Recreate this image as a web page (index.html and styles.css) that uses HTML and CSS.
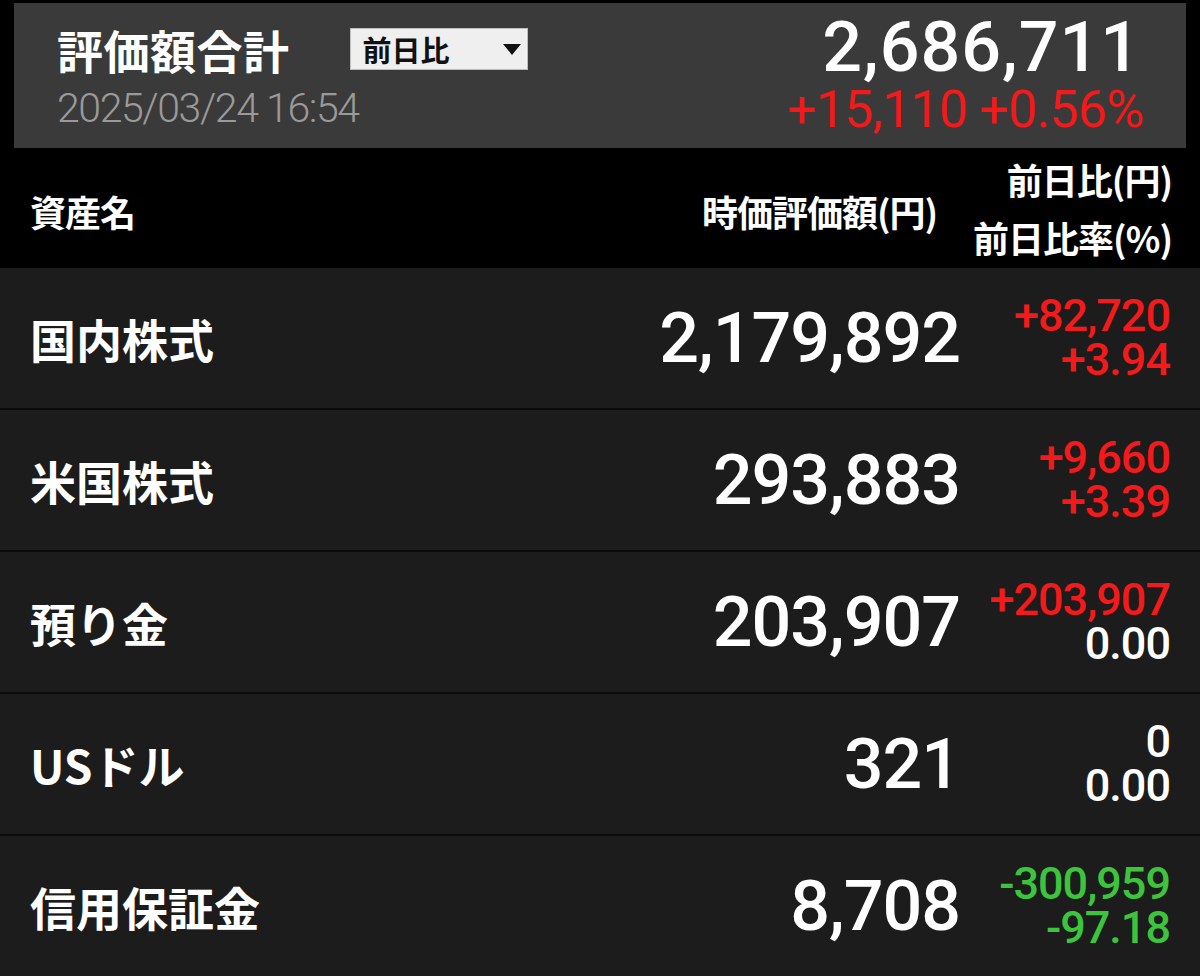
FILE: index.html
```html
<!DOCTYPE html>
<html lang="ja">
<head>
<meta charset="utf-8">
<title>評価額合計</title>
<link rel="stylesheet" href="styles.css">
</head>
<body>
<div class="screen">
  <section class="summary">
    <div class="summary-left">
      <div class="summary-title-row">
        <h1 class="summary-title">評価額合計</h1>
        <div class="select">
          <span class="select-label">前日比</span>
          <span class="select-arrow"></span>
        </div>
      </div>
      <div class="summary-date">2025/03/24 16:54</div>
    </div>
    <div class="summary-right">
      <div class="summary-total">2,686,711</div>
      <div class="summary-change up">+15,110 +0.56%</div>
    </div>
  </section>

  <div class="table-head">
    <div class="th-name">資産名</div>
    <div class="th-value">時価評価額(円)</div>
    <div class="th-change">
      <div>前日比(円)</div>
      <div>前日比率(%)</div>
    </div>
  </div>

  <div class="rows">
    <div class="row">
      <div class="name">国内株式</div>
      <div class="value">2,179,892</div>
      <div class="change up"><div>+82,720</div><div>+3.94</div></div>
    </div>
    <div class="row">
      <div class="name">米国株式</div>
      <div class="value">293,883</div>
      <div class="change up"><div>+9,660</div><div>+3.39</div></div>
    </div>
    <div class="row">
      <div class="name">預り金</div>
      <div class="value">203,907</div>
      <div class="change"><div class="up">+203,907</div><div>0.00</div></div>
    </div>
    <div class="row">
      <div class="name">USドル</div>
      <div class="value">321</div>
      <div class="change"><div>0</div><div>0.00</div></div>
    </div>
    <div class="row">
      <div class="name">信用保証金</div>
      <div class="value">8,708</div>
      <div class="change down"><div>-300,959</div><div>-97.18</div></div>
    </div>
  </div>
</div>
</body>
</html>
```
FILE: styles.css
```css
html, body {
  margin: 0;
  padding: 0;
  background: #000;
}
body {
  width: 1200px;
  height: 976px;
  overflow: hidden;
  font-family: "Noto Sans CJK JP", "Noto Sans", sans-serif;
  color: #fff;
}
.screen {
  display: flex;
  flex-direction: column;
}
.summary {
  margin: 3px 14px 0 14px;
  height: 145px;
  background: #3a3a3a;
  display: flex;
  justify-content: space-between;
  box-sizing: border-box;
  padding: 0 44px 0 43px;
}
.summary-left {
  display: flex;
  flex-direction: column;
  padding-top: 16px;
}
.summary-title-row {
  display: flex;
  align-items: center;
  gap: 60px;
}
.summary-title {
  margin: 0;
  font-size: 46px;
  font-weight: 700;
  line-height: 60px;
  letter-spacing: 0.5px;
}
.select {
  width: 178px;
  height: 42px;
  box-sizing: border-box;
  background: #efefef;
  border: 1px solid #bdbdbd;
  display: flex;
  align-items: center;
  justify-content: space-between;
  padding: 0 6px 0 12px;
  color: #111;
}
.select-label {
  font-size: 29px;
  font-weight: 700;
  line-height: 1;
}
.select-arrow {
  width: 0;
  height: 0;
  border-left: 9px solid transparent;
  border-right: 9px solid transparent;
  border-top: 11px solid #111;
}
.summary-date {
  font-family: "Roboto", "Liberation Sans", sans-serif;
  font-weight: 300;
  font-size: 41px;
  letter-spacing: -1.4px;
  color: #9a9a9a;
  line-height: 50px;
  margin-top: 4px;
}
.summary-right {
  display: flex;
  flex-direction: column;
  align-items: flex-end;
  font-family: "Roboto", "Liberation Sans", sans-serif;
  padding-top: 6px;
}
.summary-total {
  font-size: 70px;
  font-weight: 500;
  line-height: 76px;
  letter-spacing: 1px;
  margin-right: 1px;
}
.summary-change {
  font-size: 52px;
  font-weight: 400;
  line-height: 50px;
  letter-spacing: -0.8px;
  margin-right: -2px;
}
.up { color: #f21a1a; }
.down { color: #3cc43c; }

.table-head {
  height: 120px;
  display: flex;
  align-items: center;
  padding: 0 28px 0 30px;
  font-size: 36px;
  font-weight: 700;
  letter-spacing: -1px;
}
.th-name {
  flex: 1;
  padding-top: 6px;
}
.th-value {
  padding-top: 6px;
  margin-right: 36px;
}
.th-change {
  display: flex;
  flex-direction: column;
  align-items: flex-end;
  gap: 10px;
  line-height: 48px;
}

.rows {
  display: flex;
  flex-direction: column;
}
.row {
  height: 140px;
  background: #1c1c1c;
  border-bottom: 2px solid #0a0a0a;
  display: flex;
  align-items: center;
  padding: 0 30px 0 30px;
}
.name {
  flex: 1;
  font-size: 46px;
  font-weight: 700;
}
.value {
  font-family: "Roboto", "Liberation Sans", sans-serif;
  font-size: 70px;
  font-weight: 500;
  letter-spacing: -1px;
}
.change {
  width: 210px;
  display: flex;
  flex-direction: column;
  align-items: flex-end;
  font-family: "Roboto", "Liberation Sans", sans-serif;
  font-size: 45px;
  font-weight: 500;
  line-height: 44px;
  letter-spacing: -1px;
}
```
